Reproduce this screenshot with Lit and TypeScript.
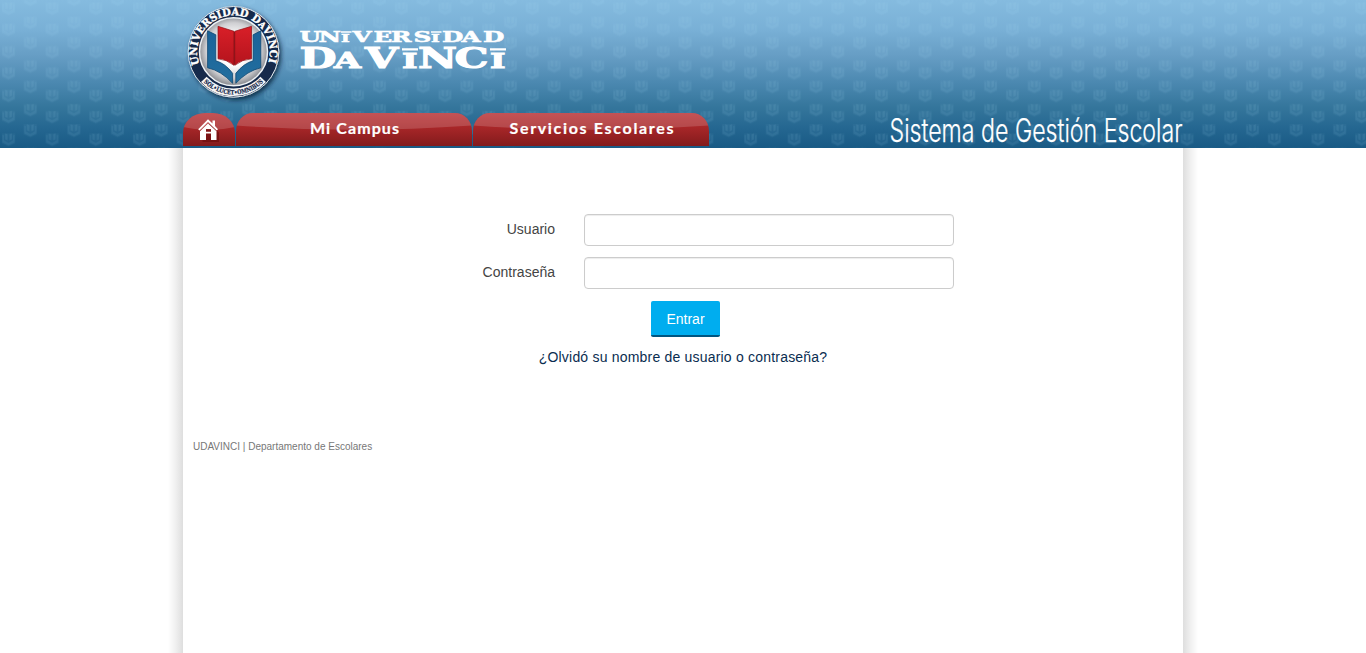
import { LitElement, html, css, svg } from "lit";
import { customElement } from "lit/decorators.js";

const MARKS = [[8.5, 7.5], [8.5, 28.5], [30.3, 21.5], [30.3, 42], [30.3, -1.6]];

const scaled = (xs: number[], k: number) => xs.map((x) => (x / k).toFixed(2)).join(" ");
const LINE_1 = scaled([1.5, 20.5, 43, 54.5, 75.5, 93, 115.5, 133, 144, 163.5, 185], 1.62);
const LINE_2 = scaled([1.5, 36, 67, 104, 120, 156.5, 192], 1.58);

@customElement("udv-emblem")
class UdvEmblem extends LitElement {
  static styles = css`
    :host { display: block; width: 110px; height: 112px; }
    svg { display: block; overflow: visible; }
    .ring { font: 700 10.5px "DejaVu Serif", serif; fill: #fff; stroke: #fff; stroke-width: 0.4; }
    .motto { font: 700 6.2px "DejaVu Serif", serif; fill: #14284b; stroke: #14284b; stroke-width: 0.2; }
  `;
  render() {
    return html`<svg width="110" height="112" viewBox="0.7 0.2 110 112">
      <defs>
        <radialGradient id="disc" cx="50%" cy="48%" r="54%">
          <stop offset="0.4" stop-color="#fff" /><stop offset="0.75" stop-color="#cfcfd2" /><stop offset="1" stop-color="#77797f" />
        </radialGradient>
        <linearGradient id="red" x1="0" y1="0" x2="0" y2="1">
          <stop offset="0" stop-color="#d91f28" /><stop offset="1" stop-color="#b4141d" />
        </linearGradient>
        <linearGradient id="blue" x1="0" y1="0" x2="0" y2="1">
          <stop offset="0" stop-color="#1b639a" /><stop offset="1" stop-color="#226f9f" />
        </linearGradient>
        <filter id="sh" x="-30%" y="-30%" width="160%" height="160%">
          <feDropShadow dx="2" dy="2.500" stdDeviation="2.2" flood-color="#001a30" flood-opacity="0.75" />
        </filter>
        <path id="top" d="M20.100 64.400 A36.300 36.300 0 1 1 88.700 63.200" />
        <path id="bot" d="M23 81 A42.500 42.500 0 0 0 85.400 81" />
      </defs>
      <circle cx="54.200" cy="52" r="45.300" fill="#13294c" stroke="#dfe7ee" stroke-width="1" filter="url(#sh)" />
      <circle cx="54.200" cy="52" r="34" fill="url(#disc)" stroke="#eef2f5" stroke-width="1.500" />
      <path d="M24.500 79.500 A40.400 40.400 0 0 0 83.900 79.500" fill="none" stroke="#f4f4f4" stroke-width="7.600" />
      <text class="ring"><textPath href="#top" textLength="137" lengthAdjust="spacingAndGlyphs">UNIVERSIDAD D<tspan font-size="8.500">A</tspan>VINCI</textPath></text>
      <text class="motto"><textPath href="#bot" startOffset="2" textLength="66" lengthAdjust="spacingAndGlyphs">SOL•LUCET•OMNIBUS</textPath></text>
      <path d="M28.300 31 L36.500 35 V61 Q46 63.500 53.300 73.500 V83.500 Q42 71 28.300 68Z M81.500 31 L73.800 35 V61 Q64.500 63.500 56.500 73.500 V83.500 Q68 71 81.500 68Z" fill="url(#blue)" stroke="#0e4671" stroke-width="0.800" />
      <path d="M38.700 26.500 L54.700 31.500 V65.500 Q47 59.500 38.700 59Z M72.200 26.500 L55.500 31.500 V65.500 Q63 59.500 72.200 59Z" fill="url(#red)" stroke="#8f1016" stroke-width="0.700" />
      <path d="M55.100 32V65" stroke="#8a0e14" stroke-width="1" />
    </svg>`;
  }
}

@customElement("app-root")
class AppRoot extends LitElement {
  static styles = css`
    :host { display: block; font-family: "Liberation Sans", Arial, sans-serif; font-size: 14px; color: #444; }
    .screen { height: 653px; overflow: hidden; display: flex; flex-direction: column; background: #fff; }
    header { height: 148px; flex: none; display: grid; background: linear-gradient(#85bbdf 0, #79b0d6 20%, #669dc4 38%, #4b88b0 56%, #35769c 72%, #246690 87%, #195a85 100%); }
    .pattern, .bar { grid-area: 1 / 1; }
    .pattern { width: 100%; height: 148px; display: block; }
    .bar { width: 1000px; margin: 0 auto; height: 148px; display: grid; grid-template-rows: 113px 35px; grid-template-columns: 526px 1fr; }
    .brand { grid-column: 1 / 3; display: flex; }
    .brand udv-emblem { margin-left: -3px; }
    .word { display: block; margin: 25px 0 0 8px; overflow: visible; }
    .word text { font-family: "DejaVu Serif", serif; font-weight: 700; fill: #fff; stroke: #fff; }
    .tabs { display: flex; gap: 1px; align-items: flex-start; }
    .tab { height: 33px; width: 236px; box-sizing: border-box; position: relative; border-radius: 17px 17px 0 0 / 18px 18px 0 0; overflow: hidden; background: linear-gradient(#b83236, #a72628 45%, #821b1c); color: #fff; display: flex; justify-content: center; text-decoration: none; }
    .tab.home { width: 52px; border-radius: 22px 22px 0 0 / 20px 20px 0 0; }
    .gloss { position: absolute; inset: 0 0 auto 0; width: 100%; height: 17px; }
    .label { position: relative; display: block; }
    .label text { font: 700 16px Lato, sans-serif; fill: #fff; stroke: #fff; stroke-width: 0.2; }
    .title { display: block; overflow: visible; justify-self: end; }
    .title text { font: 300 32px "Inter", sans-serif; fill: #fff; stroke: #fff; stroke-width: 0.25; }
    main { width: 1000px; flex: 1; margin: 0 auto; display: grid; grid-template-columns: 15px 1000px 15px; justify-content: center; }
    .left { background: linear-gradient(to left, #dedede, #f0f0f0 50%, #fff); }
    .right { background: linear-gradient(to right, #dedede, #f0f0f0 50%, #fff); }
    form { padding-top: 66px; display: flex; flex-direction: column; align-items: center; }
    .row { align-self: stretch; display: grid; grid-template-columns: 372px 370px; column-gap: 29px; height: 32px; margin-bottom: 11px; }
    label { text-align: right; line-height: 31px; }
    input { box-sizing: border-box; width: 370px; height: 32px; border: 1px solid #ccc; border-radius: 4px; box-shadow: inset 0 1px 1px rgba(0,0,0,.075); padding: 6px 12px; background: #fff; outline: none; }
    button { margin: 1px 0 0 5px; width: 69px; height: 36px; padding: 1px 0 0; border: 0; border-bottom: 2px solid #005580; border-radius: 2px; background: #00adef; color: #fff; font: 14px "Liberation Sans", Arial, sans-serif; }
    .forgot { margin-top: 10px; line-height: 20px; color: #0a2d50; text-decoration: none; letter-spacing: .2px; }
    footer { margin: 73px 0 0 10px; font-size: 10px; line-height: 14px; color: #777; }
  `;

  render() {
    return html`<div class="screen">
      <header>
        <svg class="pattern" aria-hidden="true">
          <defs>
            <pattern id="marks" width="43.65" height="43.65" patternUnits="userSpaceOnUse">
              ${MARKS.map(([x, y]) => svg`<g transform="translate(${x} ${y})" fill="#a8d7f2">
                <path opacity=".04" d="M-6.500 -5H6.500V5L0 8L-6.500 5Z" />
                <path opacity=".08" d="M-6 -3.500L-4.500 -3V2L0 4.500L4.500 2V-3L6 -3.500V4L0 7L-6 4Z" />
                <path opacity=".1" d="M-3.300 -5L-1 -4V2L-3.300 1Z M3.300 -5L1 -4V2L3.300 1Z" />
              </g>`)}
            </pattern>
          </defs>
          <rect width="100%" height="148" fill="url(#marks)" />
        </svg>
        <div class="bar">
          <div class="brand">
            <udv-emblem></udv-emblem>
            <svg class="word" width="220" height="50" viewBox="0 0 220 50">
              <text transform="scale(1.62 1)" x=${LINE_1} y="17.500" font-size="15.200" stroke-width=".5">UN<tspan font-size="11.500">I</tspan>VERS<tspan font-size="11.500">I</tspan>DAD</text>
              <text transform="scale(1.58 1)" x=${LINE_2} y="43.500" font-size="27" stroke-width="1">D<tspan font-size="22">A</tspan>V<tspan font-size="21">I</tspan>NC<tspan font-size="21">I</tspan></text>
              <path d="M43 6.200h10.500v1.500h-10.500z M133 6.200h10.500v1.500h-10.500z M104 23.300h16v2.300h-16z M192 23.300h16v2.300h-16z" fill="#fff" />
            </svg>
          </div>
          <nav class="tabs">
            <a class="tab home" aria-label="Inicio">
              <svg class="gloss" viewBox="0 0 52 17" preserveAspectRatio="none"><path d="M0 0H52V14Q26 20 0 14Z" fill="#fff" opacity=".16" /></svg>
              <svg class="label" width="52" height="33" viewBox="0 0 52 33">
                <path d="M16 19L25 10L35 19V28.500H18.500V20Z" transform="translate(1 .5)" fill="#500" opacity=".4" />
                <path d="M15.200 16.200L25 6.300L29.500 10.600V7.500H32V13.100L35 16.200L33.700 17.400L25 9L16.500 17.400Z M17 18.200L25 10.500L33.500 18.200V27H28V20.500H23V27H17Z M23 18.700H28V16H23Z" fill="#fff" fill-rule="evenodd" />
              </svg>
            </a>
            ${[["Mi Campus", 74, 89], ["Servicios Escolares", 36.5, 164]].map(([t, x, w]) => html`<a class="tab">
              <svg class="gloss" viewBox="0 0 236 17" preserveAspectRatio="none"><path d="M0 0H236V12.500Q118 21 0 12.500Z" fill="#fff" opacity=".16" /></svg>
              <svg class="label" width="236" height="33"><text x=${x} y="21" textLength=${w}>${t}</text></svg>
            </a>`)}
          </nav>
          <svg class="title" width="294" height="35"><text x="0.500" y="29.200" textLength="293" lengthAdjust="spacingAndGlyphs">Sistema de Gestión Escolar</text></svg>
        </div>
      </header>
      <main>
        <div class="left"></div>
        <section>
          <form>
            <div class="row"><label for="u">Usuario</label><input id="u" type="text" /></div>
            <div class="row"><label for="p">Contraseña</label><input id="p" type="password" /></div>
            <button type="button">Entrar</button>
            <a class="forgot">¿Olvidó su nombre de usuario o contraseña?</a>
          </form>
          <footer>UDAVINCI | Departamento de Escolares</footer>
        </section>
        <div class="right"></div>
      </main>
    </div>`;
  }
}
